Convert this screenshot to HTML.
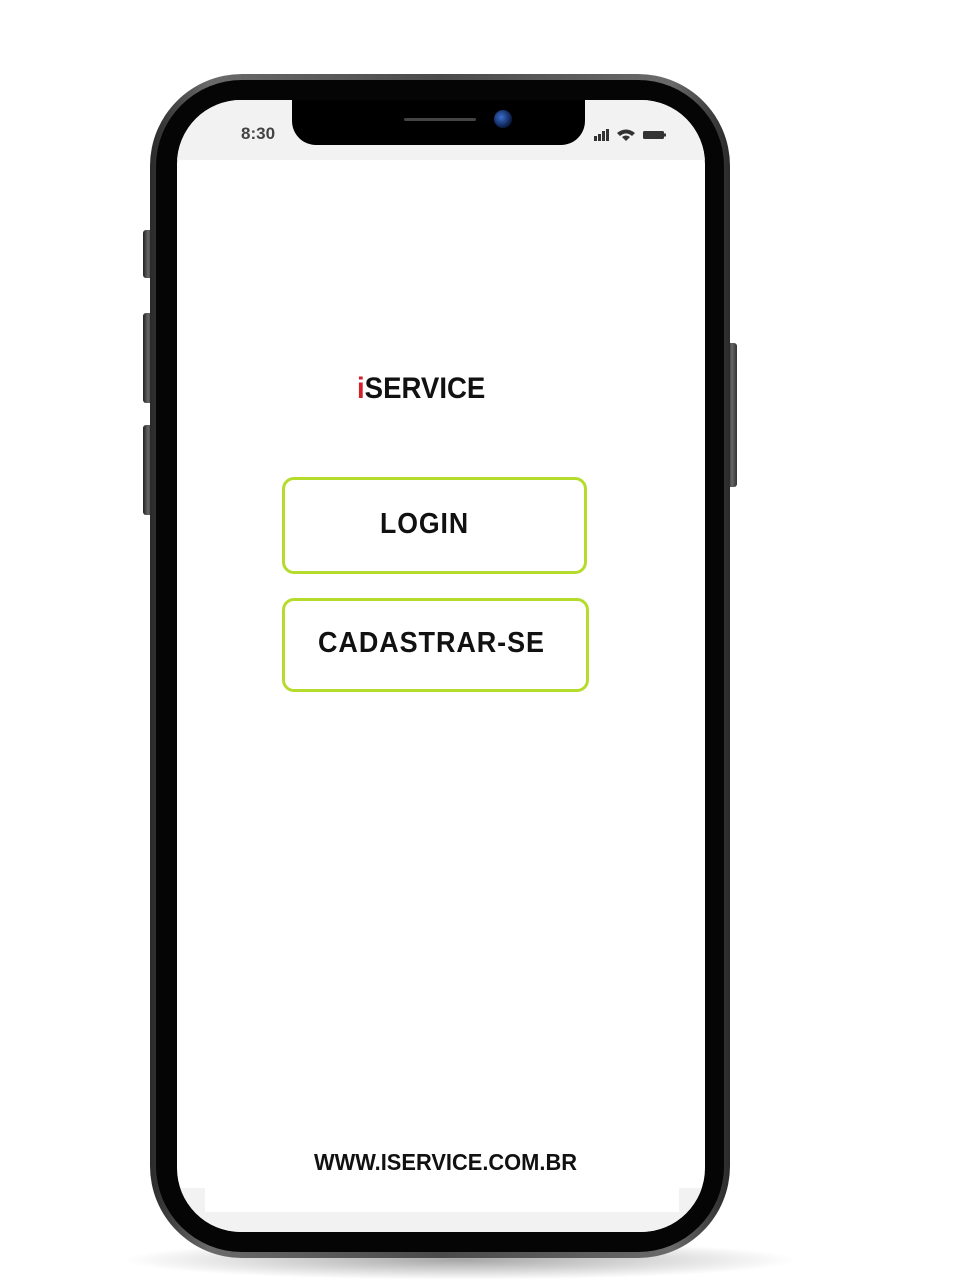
<!DOCTYPE html>
<html><head><style>
body{margin:0;width:961px;height:1280px;background:#fff;position:relative;overflow:hidden;font-family:"Liberation Sans",sans-serif}
.abs{position:absolute}
.shadow{left:120px;top:1240px;width:680px;height:40px;border-radius:50%;background:radial-gradient(ellipse at center,rgba(0,0,0,.35),rgba(0,0,0,0) 70%)}
.frame{left:150px;top:74px;width:580px;height:1184px;border-radius:92px;background:linear-gradient(90deg,#2a2a2a,#6a6a6a 10%,#4a4a4a 50%,#6a6a6a 90%,#2a2a2a)}
.black{left:156px;top:80px;width:568px;height:1172px;border-radius:86px;background:#050505}
.screen{left:177px;top:100px;width:528px;height:1132px;border-radius:64px;background:#fff;overflow:hidden}
.status{left:0;top:0;width:528px;height:60px;background:#f2f2f2}
.notch{left:115px;top:-2px;width:293px;height:47px;background:#000;border-radius:0 0 24px 24px}
.btn{border:3px solid #b5dc2c;border-radius:12px;box-sizing:border-box}
.side{background:linear-gradient(90deg,#222,#666,#333);border-radius:3px}
.t{white-space:nowrap;font-weight:bold;color:#111}
</style></head><body>
<div class="abs shadow"></div>
<div class="abs side" style="left:143px;top:230px;width:10px;height:48px"></div>
<div class="abs side" style="left:143px;top:313px;width:10px;height:90px"></div>
<div class="abs side" style="left:143px;top:425px;width:10px;height:90px"></div>
<div class="abs side" style="left:727px;top:343px;width:10px;height:144px"></div>
<div class="abs frame"></div>
<div class="abs black"></div>
<div class="abs screen">
  <div class="abs status"></div>
  <div class="abs" style="left:0;top:1088px;width:528px;height:44px;background:#f2f2f2"></div>
  <div class="abs" style="left:28px;top:1088px;width:474px;height:24px;background:#fff"></div>
  <div class="abs notch"></div>
  <div class="abs" style="left:227px;top:18px;width:72px;height:3px;background:#444;border-radius:2px"></div>
  <div class="abs" style="left:317px;top:10px;width:18px;height:18px;border-radius:50%;background:radial-gradient(circle at 40% 40%,#3a6fd0,#0a1a40 70%)"></div>
  <div class="abs t" style="left:64px;top:24px;font-size:17px;color:#444">8:30</div>
  <svg class="abs" style="left:416px;top:27px" width="78" height="16" viewBox="0 0 78 16">
    <rect x="1" y="9" width="3" height="5" fill="#333"/><rect x="5" y="7" width="3" height="7" fill="#333"/><rect x="9" y="4" width="3" height="10" fill="#333"/><rect x="13" y="2" width="3" height="12" fill="#333"/>
    <path d="M24 6 Q33 -1 42 6 L39 9 Q33 4 27 9Z" fill="#333"/><path d="M29 10 Q33 7 37 10 L33 14Z" fill="#333"/>
    <rect x="50" y="4" width="21" height="8" rx="1.5" fill="#333"/><rect x="71" y="6.5" width="2" height="3" fill="#333"/>
  </svg>
</div>
<div class="abs t" style="left:357px;top:372px;font-size:30px;transform:scaleX(.92);transform-origin:left"><span style="color:#d4202a">i</span>SERVICE</div>
<div class="abs btn" style="left:282px;top:477px;width:305px;height:97px"></div>
<div class="abs t" style="left:380px;top:508px;font-size:29px;letter-spacing:1px;transform:scaleX(.92);transform-origin:left">LOGIN</div>
<div class="abs btn" style="left:282px;top:598px;width:307px;height:94px"></div>
<div class="abs t" style="left:318px;top:627px;font-size:29px;letter-spacing:1px;transform:scaleX(.93);transform-origin:left">CADASTRAR-SE</div>
<div class="abs t" style="left:314px;top:1149px;font-size:23px;transform:scaleX(.95);transform-origin:left">WWW.ISERVICE.COM.BR</div>
</body></html>
